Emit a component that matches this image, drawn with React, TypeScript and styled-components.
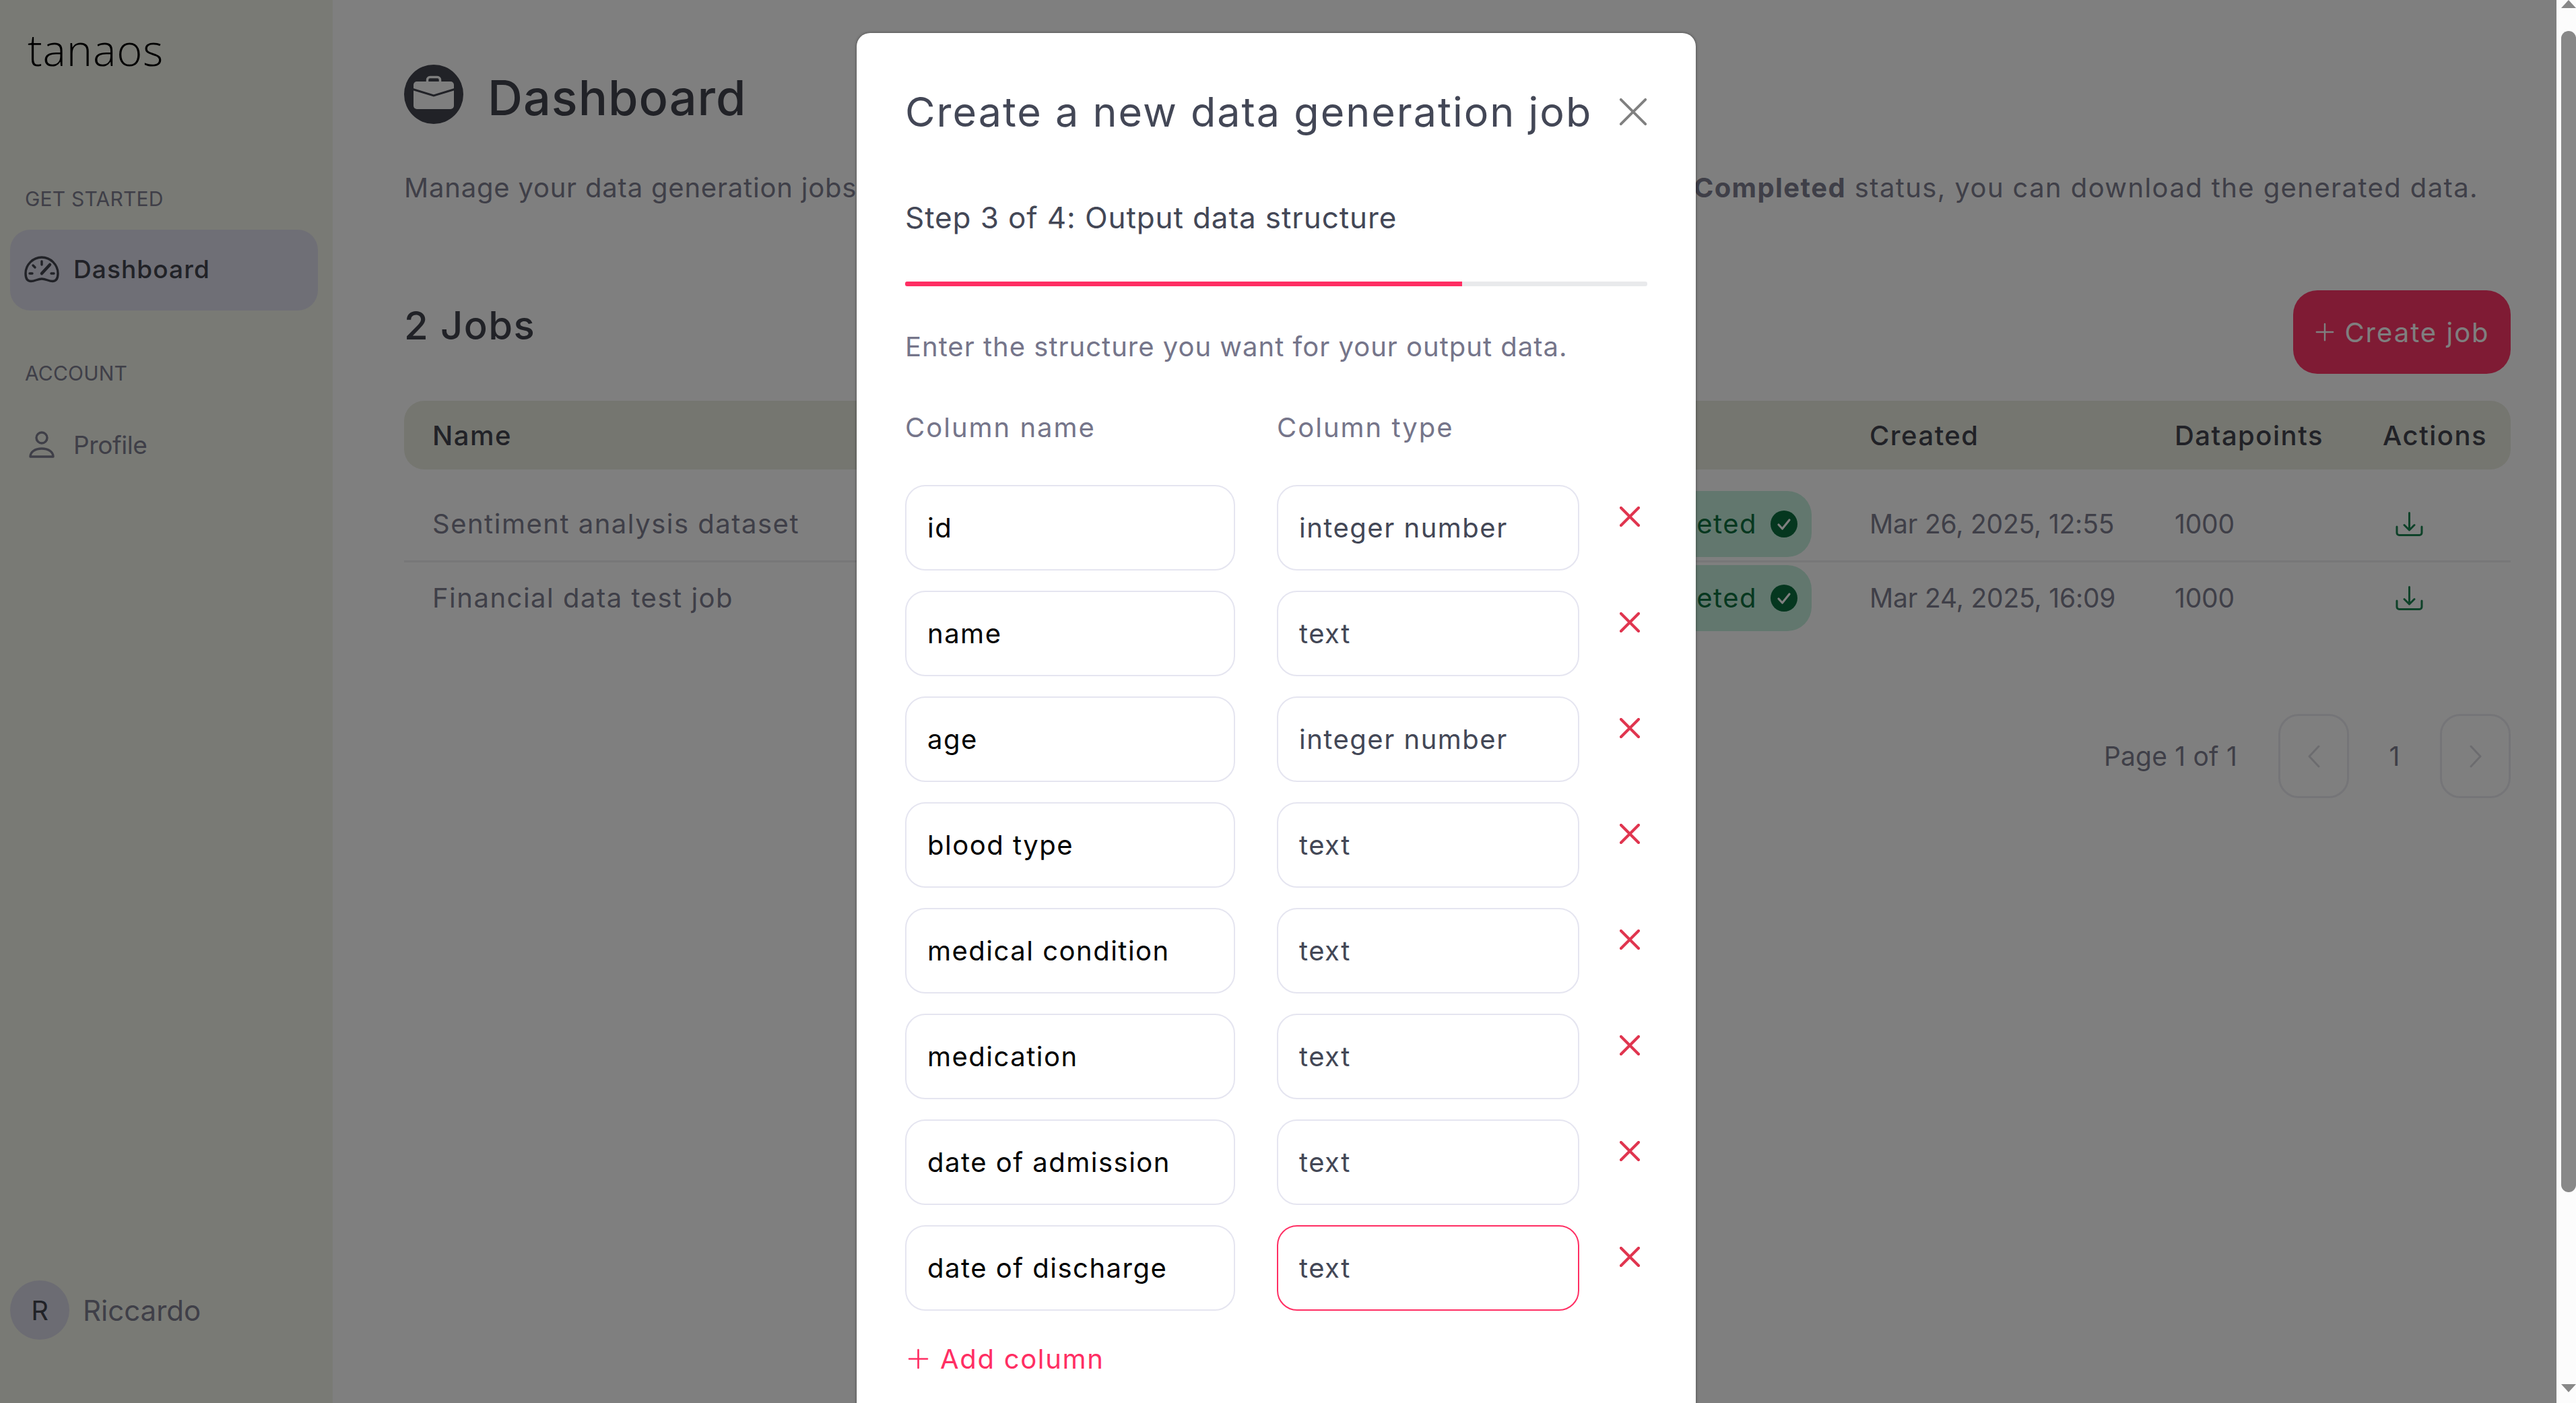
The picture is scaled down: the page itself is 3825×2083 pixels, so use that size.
import React from "react";
import styled, { createGlobalStyle } from "styled-components";

const Global = createGlobalStyle`
  html, body { margin: 0; padding: 0; height: 100%; overflow: hidden; background: #fff; }
  * { box-sizing: border-box; }
  body { font-family: Inter, "Noto Sans", sans-serif; }
`;

const Shell = styled.div`display: flex; width: 3825px; height: 2083px; overflow: hidden;`;
const Viewport = styled.div`position: relative; display: flex; width: 3796px; height: 100%; overflow: hidden; background: #fff;`;

const Sidebar = styled.aside`display: flex; flex-direction: column; flex: 0 0 494px; height: 100%; background: #f2f4ea; padding-top: 38px;`;
const Logo = styled.div`font-family: "Open Sans", sans-serif; font-weight: 300; font-size: 65px; line-height: 70px; letter-spacing: .8px; color: #000; padding-left: 41px; margin-bottom: 167px;`;
const SectionLabel = styled.div`font-size: 30px; line-height: 40px; color: #7e7e90; padding-left: 37px; margin-bottom: 26px; letter-spacing: .2px;`;
const NavItem = styled.div<{ $active?: boolean }>`
  display: flex; align-items: center; gap: 21px; width: 457px; height: 120px; margin-left: 15px; padding: 0 0 ${p => (p.$active ? 3 : 0)}px 21px;
  border-radius: 30px; background: ${p => (p.$active ? "#dedeec" : "transparent")}; margin-bottom: 73px;
  font-size: 37px; letter-spacing: ${p => (p.$active ? 1.100 : -0.4)}px; font-weight: ${p => (p.$active ? 500 : 400)}; color: ${p => (p.$active ? "#42444e" : "#7e7e90")};
`;
const NavIcon = styled.span`display: flex; justify-content: center; width: 52px; flex: none;`;
const UserBox = styled.div`display: flex; align-items: center; gap: 20px; margin-top: auto; padding: 0 0 94px 15px;`;
const Avatar = styled.div`display: flex; align-items: center; justify-content: center; width: 88px; height: 88px; border-radius: 50%; background: #d9d9e6; color: #42444e; font-size: 40px;`;
const UserName = styled.div`font-size: 42px; color: #7e7e90;`;

const Main = styled.main`flex: 1; min-width: 0; padding: 96px 68px 0 106px;`;
const HeaderRow = styled.div`display: flex; align-items: center; gap: 36px; height: 88px;`;
const PageTitle = styled.h1`margin: 10px 0 0; font-size: 72px; line-height: 88px; font-weight: 500; color: #42444e; letter-spacing: 1px;`;
const Description = styled.p`display: flex; justify-content: space-between; margin: 65px 0 0; padding-right: 48px; font-size: 40px; line-height: 60px; color: #7e7e90; white-space: nowrap; letter-spacing: 1.400px;`;
const LeadText = styled.span`letter-spacing: .8px;`;
const Strong = styled.b`font-weight: 700;`;
const JobsRow = styled.div`display: flex; justify-content: space-between; align-items: flex-start; margin-top: 122px;`;
const JobsTitle = styled.h2`margin: 0; font-size: 58px; line-height: 104px; font-weight: 500; color: #42444e; letter-spacing: 1.400px;`;
const PrimaryButton = styled.button`
  display: flex; align-items: center; justify-content: center; gap: 15px; width: 323px; height: 124px; border: 0; border-radius: 36px;
  background: #ff3669; color: #fff; font: 400 40px Inter, sans-serif; letter-spacing: 2px; padding: 0 0 0 2px;
`;
const TableHead = styled.div`
  display: grid; grid-template-columns: 1500px 634px 453px 309px 1fr; align-items: center; height: 102px; margin-top: 40px; padding-left: 42px;
  border-radius: 30px; background: #eaece0; color: #42444e; font-size: 40px; font-weight: 500; letter-spacing: 1.500px;
`;
const TableBody = styled.div`margin-top: 28px;`;
const TableRow = styled.div<{ $last?: boolean }>`
  display: grid; grid-template-columns: 1500px 634px 453px 309px 1fr; align-items: center; height: ${p => (p.$last ? 105 : 110)}px; padding-left: 42px;
  padding-bottom: ${p => (p.$last ? 0 : 2)}px;
  border-bottom: ${p => (p.$last ? "0" : "3px solid #eeeef0")}; color: #7e7e90; font-size: 40px; letter-spacing: 1.500px;
`;
const NumericCell = styled.span`font-size: 39px; letter-spacing: -0.200px;`;
const Badge = styled.div`
  display: flex; align-items: center; justify-content: flex-end; gap: 20px; width: 320px; height: 98px; margin-left: 228px; padding-right: 21px;
  border-radius: 36px; background: #c4eedc; color: #0e7040;
`;
const ActionCell = styled.span`display: flex; padding-left: 19px;`;
const Pagination = styled.div`display: flex; justify-content: flex-end; align-items: center; margin-top: 120px; color: #7e7e90; font-size: 39px;`;
const PageLabel = styled.span`margin-right: 61px; letter-spacing: .2px;`;
const PageButton = styled.div`display: flex; align-items: center; justify-content: center; width: 105px; height: 125px; border: 3px solid #ebebf0; border-radius: 30px;`;
const PageNum = styled.span`width: 135px; text-align: center;`;

const Scrim = styled.div`position: absolute; inset: 0; display: flex; justify-content: center; padding: 49px 6px 0 0; background: rgba(0,0,0,.5); overflow: hidden;`;
const Modal = styled.section`flex: 0 0 1246px; height: 2240px; padding: 77px 72px 0; background: #fff; border-radius: 20px; box-shadow: 0 0 4px rgba(0,0,0,.45);`;
const ModalHead = styled.div`display: flex; justify-content: space-between; align-items: center; height: 80px;`;
const ModalTitle = styled.h2`margin: 0; font-size: 61px; line-height: 80px; font-weight: 400; color: #434756; letter-spacing: 2px; white-space: nowrap;`;
const StepTitle = styled.div`margin-top: 87px; font-size: 44px; line-height: 60px; color: #434756; letter-spacing: .9px;`;
const ProgressTrack = styled.div`height: 7px; margin-top: 65px; background: #e9eaec; border-radius: 3px; overflow: hidden;`;
const ProgressFill = styled.div`height: 100%; background: #ff2e63;`;
const ModalText = styled.p`margin: 60px 0 0; font-size: 40px; line-height: 60px; color: #75758a; letter-spacing: 1px;`;
const FieldGrid = styled.div`display: grid; grid-template-columns: 490px 449px 1fr; column-gap: 62px; row-gap: 30px; align-items: start;`;
const FieldLabels = styled(FieldGrid)`margin: 65px 0 60px; font-size: 40px; line-height: 50px; color: #75758a; letter-spacing: 2px;`;
const Field = styled.div<{ $kind: "name" | "type"; $focus?: boolean }>`
  display: flex; align-items: center; height: 127px; padding-left: 31px; border: 2.500px solid ${p => (p.$focus ? "#ff2e63" : "#e5e5f0")}; border-radius: 30px;
  font-size: 40px; letter-spacing: 1.500px; color: ${p => (p.$kind === "name" ? "#000" : "#434756")};
`;
const RemoveIcon = styled.span`display: flex; margin: 32px 0 0 -2px;`;
const AddRow = styled.div`display: flex; align-items: center; gap: 17px; height: 50px; margin: 46px 0 0 4px; color: #ff2e63; font-size: 40px; letter-spacing: 1.700px;`;

const Rail = styled.div`display: flex; flex-direction: column; flex: 0 0 29px; height: 100%; background: #fcfcfc; padding-left: 7px;`;
const ArrowBox = styled.div<{ $height: number }>`display: flex; height: ${p => p.$height}px;`;
const Thumb = styled.div`width: 22px; height: 1724px; background: #888; border-radius: 11px;`;

const Gauge = () => (
  <svg width="52" height="40" viewBox="0 0 52 40" fill="none" stroke="#42444e" strokeWidth="3.4" strokeLinecap="round" strokeLinejoin="round">
    <path d="M10 37.5C4 37.5 2 32 2 26 2 13 13 2 26 2s24 11 24 24c0 6-2 11.500-8 11.500-6 0-10-3.500-16-3.500s-10 3.500-16 3.500Z" />
    <path d="M26 8v5M13 14l3 3M8 26h4M40 26h4" />
    <path d="M26 26 38 13" strokeWidth="4.500" />
  </svg>
);
const Person = () => (
  <svg width="40" height="40" viewBox="0 0 40 40" fill="none" stroke="#7e7e90" strokeWidth="3.400" strokeLinejoin="round">
    <circle cx="20" cy="10" r="8" />
    <path d="M3 38c0-7 7-12 17-12s17 5 17 12H3Z" />
  </svg>
);
const Briefcase = () => (
  <svg width="88" height="88" viewBox="0 0 88 88">
    <circle cx="44" cy="44" r="44" fill="#42444e" />
    <rect x="34.500" y="18.500" width="19" height="11" rx="4" fill="none" stroke="#fff" strokeWidth="3.500" />
    <rect x="14" y="25" width="60" height="41" rx="5" fill="#fff" />
    <path d="M13 36.500 44 46l31-9.500" fill="none" stroke="#42444e" strokeWidth="3" />
  </svg>
);
const Plus = ({ color, size }: { color: string; size: number }) => (
  <svg width={size} height={size} viewBox="0 0 30 30" stroke={color} strokeWidth="2.600" strokeLinecap="round">
    <path d="M15 2v26M2 15h26" />
  </svg>
);
const Cross = ({ color, size, width }: { color: string; size: number; width: number }) => (
  <svg width={size} height={size} viewBox="0 0 30 30" stroke={color} strokeWidth={width} strokeLinecap="round">
    <path d="M2 2l26 26M28 2 2 28" />
  </svg>
);
const Download = () => (
  <svg width="41" height="36" viewBox="0 0 41 36" fill="none" stroke="#1c8452" strokeWidth="3" strokeLinecap="round" strokeLinejoin="round">
    <path d="M20.500 1.500v25M13 19.500l7.500 7.500L28 19.500" />
    <path d="M2 22v9c0 2 1.500 3.500 3.500 3.500h30c2 0 3.500-1.500 3.500-3.500v-9" />
  </svg>
);
const CheckCircle = () => (
  <svg width="40" height="40" viewBox="0 0 40 40">
    <circle cx="20" cy="20" r="20" fill="#0a6e3f" />
    <path d="M12 21l5.500 6L28 14" fill="none" stroke="#fff" strokeWidth="3.200" strokeLinecap="round" strokeLinejoin="round" />
  </svg>
);
const Chevron = ({ dir }: { dir: "left" | "right" }) => (
  <svg width="18" height="34" viewBox="0 0 18 34" fill="none" stroke="#d8d8de" strokeWidth="3" strokeLinecap="round" strokeLinejoin="round">
    <path d={dir === "left" ? "M16 2 2 17l14 15" : "M2 2l14 15L2 32"} />
  </svg>
);
const Tri = ({ up }: { up?: boolean }) => (
  <svg width="22" height="12" viewBox="0 0 22 12" fill="#888">
    <path d={up ? "M11 0 22 12H0Z" : "M0 0h22L11 12Z"} />
  </svg>
);

const columns: [string, string][] = [
  ["id", "integer number"],
  ["name", "text"],
  ["age", "integer number"],
  ["blood type", "text"],
  ["medical condition", "text"],
  ["medication", "text"],
  ["date of admission", "text"],
  ["date of discharge", "text"],
];
const jobs = [
  { name: "Sentiment analysis dataset", created: "Mar 26, 2025, 12:55" },
  { name: "Financial data test job", created: "Mar 24, 2025, 16:09" },
];

export default function App() {
  return (
    <Shell>
      <Global />
      <Viewport>
        <Sidebar>
          <Logo>tanaos</Logo>
          <SectionLabel>GET STARTED</SectionLabel>
          <NavItem $active><NavIcon><Gauge /></NavIcon>Dashboard</NavItem>
          <SectionLabel>ACCOUNT</SectionLabel>
          <NavItem><NavIcon><Person /></NavIcon>Profile</NavItem>
          <UserBox><Avatar>R</Avatar><UserName>Riccardo</UserName></UserBox>
        </Sidebar>
        <Main>
          <HeaderRow><Briefcase /><PageTitle>Dashboard</PageTitle></HeaderRow>
          <Description>
            <LeadText>Manage your data generation jobs here.</LeadText>
            <span><Strong>Completed</Strong> status, you can download the generated data.</span>
          </Description>
          <JobsRow>
            <JobsTitle>2 Jobs</JobsTitle>
            <PrimaryButton><Plus color="#fff" size={28} />Create job</PrimaryButton>
          </JobsRow>
          <TableHead><span>Name</span><span>Status</span><span>Created</span><span>Datapoints</span><span>Actions</span></TableHead>
          <TableBody>
            {jobs.map((j, i) => (
              <TableRow key={j.name} $last={i === jobs.length - 1}>
                <span>{j.name}</span>
                <Badge>Completed <CheckCircle /></Badge>
                <NumericCell>{j.created}</NumericCell>
                <NumericCell>1000</NumericCell>
                <ActionCell><Download /></ActionCell>
              </TableRow>
            ))}
          </TableBody>
          <Pagination>
            <PageLabel>Page 1 of 1</PageLabel>
            <PageButton><Chevron dir="left" /></PageButton>
            <PageNum>1</PageNum>
            <PageButton><Chevron dir="right" /></PageButton>
          </Pagination>
        </Main>
        <Scrim>
          <Modal>
            <ModalHead>
              <ModalTitle>Create a new data generation job</ModalTitle>
              <Cross color="#808080" size={42} width={2.800} />
            </ModalHead>
            <StepTitle>Step 3 of 4: Output data structure</StepTitle>
            <ProgressTrack><ProgressFill style={{ width: `${(3 / 4) * 100}%` }} /></ProgressTrack>
            <ModalText>Enter the structure you want for your output data.</ModalText>
            <FieldLabels><span>Column name</span><span>Column type</span></FieldLabels>
            <FieldGrid>
              {columns.map(([n, t], i) => (
                <React.Fragment key={n}>
                  <Field $kind="name">{n}</Field>
                  <Field $kind="type" $focus={i === columns.length - 1}>{t}</Field>
                  <RemoveIcon><Cross color="#e0354f" size={30} width={4.200} /></RemoveIcon>
                </React.Fragment>
              ))}
            </FieldGrid>
            <AddRow><Plus color="#ff2e63" size={31} />Add column</AddRow>
          </Modal>
        </Scrim>
      </Viewport>
      <Rail>
        <ArrowBox $height={46}><Tri up /></ArrowBox>
        <Thumb />
        <ArrowBox $height={297}><span style={{ marginTop: 297 - 16 }}><Tri /></span></ArrowBox>
      </Rail>
    </Shell>
  );
}
